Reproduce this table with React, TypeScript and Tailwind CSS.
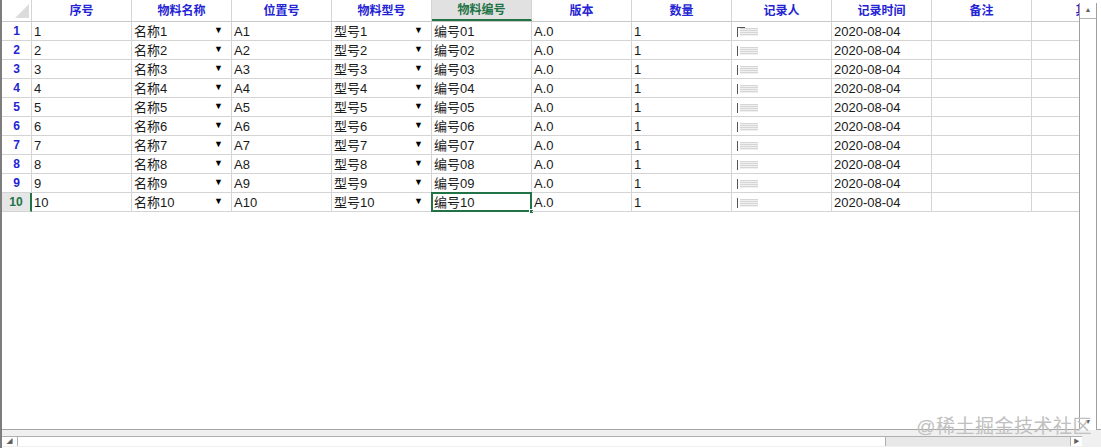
import React from "react";

const columns = [
  "序号",
  "物料名称",
  "位置号",
  "物料型号",
  "物料编号",
  "版本",
  "数量",
  "记录人",
  "记录时间",
  "备注",
  "其",
];

const rows = Array.from({ length: 10 }, (_, i) => {
  const n = i + 1;
  const pad = n < 10 ? `0${n}` : `${n}`;
  return [
    `${n}`,
    `名称${n}`,
    `A${n}`,
    `型号${n}`,
    `编号${pad}`,
    "A.0",
    "1",
    "",
    "2020-08-04",
    "",
    "",
  ];
});

// blurred "记录人" placeholder
function Blurred({ first }: { first: boolean }) {
  return (
    <div className="flex h-full items-center pl-[3px]">
      <div className="relative h-[11px] w-[22px]">
        <div className="absolute left-0 top-[1px] h-[10px] w-[1px] bg-[#555]" />
        {first && <div className="absolute left-0 top-[1px] h-[1px] w-[8px] bg-[#555]" />}
        <div className="absolute left-[3px] top-[2px] h-[8px] w-[18px] bg-[repeating-linear-gradient(to_bottom,#d6d6d6_0px,#d6d6d6_1px,#f0f0f0_1px,#f0f0f0_2px)]" />
      </div>
    </div>
  );
}

export default function App() {
  return (
    <div
      className="relative h-[448px] w-[1101px] overflow-hidden border-l-2 border-[#7d7d7d] bg-white text-[13px] text-[#1a1a1a]"
      style={{ fontFamily: '"Liberation Sans", "Noto Sans CJK SC", sans-serif' }}
    >
      <div className="flex h-[430px] border-b border-[#a6a6a6]">
        {/* Grid area */}
        <div className="flex-1 overflow-hidden">
          {/* Header */}
          <div className="flex h-[22px] w-max border-b border-[#c8c8c8]">
            <div className="relative w-[30px] border-r border-[#d4d4d4]">
              <div className="absolute bottom-[3px] right-[2px] h-0 w-0 border-b-[14px] border-l-[14px] border-b-[#dcdcdc] border-l-transparent" />
            </div>
            {columns.map((c, ci) => (
              <div
                key={c}
                className={
                  ci === 4
                    ? "flex w-[100px] items-center justify-center border-b-2 border-r border-b-[#217346] border-r-[#d4d4d4] bg-[#e1e1e1] pt-[1px] text-[12px] font-bold text-[#217346]"
                    : "flex w-[100px] items-center justify-center border-r border-[#d4d4d4] text-[12px] font-bold text-[#2424d4]"
                }
              >
                {c}
              </div>
            ))}
          </div>
          {/* Rows */}
          {rows.map((r, ri) => {
            const last = ri === 9;
            return (
              <div key={ri} className="flex h-[19px] w-max">
                <div
                  className={
                    last
                      ? "flex w-[30px] items-center justify-center border-b border-r-2 border-b-[#d4d4d4] border-r-[#217346] bg-[#e6e6e6] text-[12px] font-bold text-[#217346]"
                      : "flex w-[30px] items-center justify-center border-b border-r border-[#d4d4d4] text-[12px] font-bold text-[#2424d4]"
                  }
                >
                  {ri + 1}
                </div>
                {r.map((v, ci) => {
                  const selected = last && ci === 4;
                  return (
                    <div
                      key={ci}
                      className={
                        selected
                          ? "relative -ml-[1px] -mt-[1px] flex h-[20px] w-[101px] items-center border-2 border-[#217346] pl-[1px] leading-none"
                          : "relative flex w-[100px] items-center border-b border-r border-[#d4d4d4] pl-[2px] leading-none"
                      }
                    >
                      {ci === 7 ? <Blurred first={ri === 0} /> : v}
                      {(ci === 1 || ci === 3) && (
                        <span className="absolute right-[8px] top-[4px] text-[9px] text-black">▼</span>
                      )}
                      {selected && (
                        <div className="absolute -bottom-[4px] -right-[4px] h-[5px] w-[5px] border border-white bg-[#217346]" />
                      )}
                    </div>
                  );
                })}
              </div>
            );
          })}
        </div>
        {/* Vertical scrollbar */}
        <div className="flex w-[22px] pt-[3px]">
          <div className="flex h-[427px] w-[18px] flex-col border-x border-[#a0a0a0] bg-white">
            <div className="flex h-[16px] items-center justify-center border-b border-[#b4b4b4] text-[7px] text-[#606060]">
              ▲
            </div>
            <div className="flex-1" />
            <div className="mb-[1px] flex h-[14px] items-center justify-center text-[7px] text-[#606060]">▼</div>
          </div>
        </div>
      </div>
      {/* Horizontal scrollbar */}
      <div className="h-[17px] bg-[#f0f0f0] pt-[6px]">
        <div className="flex h-[10px] w-[1080px] border-t border-[#b0b0b0]">
          <div className="flex w-[16px] items-center justify-center border-r border-[#b0b0b0] bg-white text-[6px] text-[#606060]">
            ◢
          </div>
          <div className="w-[868px] border-r border-[#b0b0b0] bg-white" />
          <div className="flex-1 bg-[#e8e8e8]" />
          <div className="flex w-[12px] items-center justify-center border-l border-[#b0b0b0] bg-white text-[6px] text-[#606060]">
            ▶
          </div>
        </div>
      </div>
      {/* Watermark */}
      <div className="pointer-events-none absolute bottom-[12px] right-[9px] text-[19px] leading-none tracking-[0.5px] text-[#c0c0c0]">
        @稀土掘金技术社区
      </div>
    </div>
  );
}
